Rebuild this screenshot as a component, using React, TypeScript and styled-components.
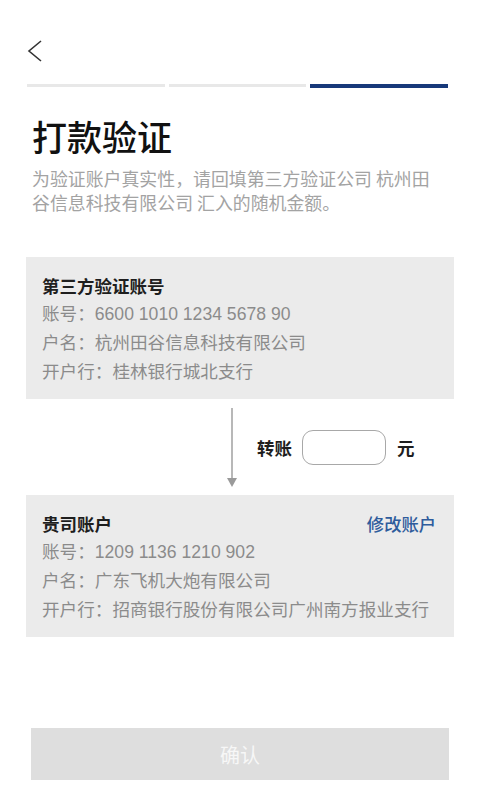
import React from "react";
import styled, { createGlobalStyle } from "styled-components";

const Global = createGlobalStyle`
  html, body { margin: 0; padding: 0; background: #ffffff; }
  body { font-family: "Noto Sans CJK SC", "Noto Sans", sans-serif; -webkit-font-smoothing: antialiased; }
  * { box-sizing: border-box; }
`;

const Page = styled.div`
  width: 480px;
  min-height: 800px;
  background: #fff;
  display: flex;
  flex-direction: column;
`;

const Header = styled.div`
  padding: 40px 0 0 27px;
  height: 62px;
  display: flex;
  align-items: flex-start;
`;

const BackButton = styled.button`
  border: 0;
  background: none;
  padding: 0;
  width: 16px;
  height: 22px;
  display: flex;
  cursor: pointer;
`;

const Progress = styled.div`
  margin-top: 21px;
  padding: 0 32px 0 27px;
  height: 5px;
  display: flex;
  align-items: center;
  gap: 4px;
`;

const Segment = styled.div<{ $active?: boolean }>`
  flex: 1;
  height: ${(p) => (p.$active ? "4px" : "3px")};
  background: ${(p) => (p.$active ? "#17397a" : "#e8e8e8")};
`;

const Title = styled.h1`
  margin: 26px 0 0;
  padding: 0 32px;
  font-size: 35px;
  line-height: 44px;
  font-weight: 500;
  color: #111;
  letter-spacing: 0;
`;

const Desc = styled.p`
  margin: 9px 0 0;
  padding: 0 40px 0 32px;
  font-size: 17.9px;
  line-height: 23.5px;
  color: #a3a3a3;
`;

const Card = styled.div<{ $first?: boolean }>`
  margin: ${(p) => (p.$first ? "43px" : "0")} 26px 0;
  background: #ebebeb;
  padding: 14px 18px 12px 16px;
  display: flex;
  flex-direction: column;
`;

const CardHead = styled.div`
  display: flex;
  justify-content: space-between;
  align-items: center;
  height: 29px;
`;

const CardTitle = styled.div`
  font-size: 17.5px;
  font-weight: 700;
  color: #1e1e1e;
`;

const EditLink = styled.a`
  font-size: 17.3px;
  font-weight: 500;
  color: #2e5c9c;
  text-decoration: none;
  cursor: pointer;
`;

const Row = styled.div`
  font-family: "Liberation Sans", "Noto Sans CJK SC", sans-serif;
  font-size: 17.6px;
  line-height: 29px;
  color: #8b8b8b;
  white-space: nowrap;
`;

const TransferRow = styled.div`
  height: 96px;
  padding-left: 227px;
  display: flex;
  align-items: center;
`;

const ArrowBox = styled.div`
  width: 10px;
  height: 79px;
  display: flex;
  margin-right: 20px;
`;

const TransferLabel = styled.span`
  font-size: 17.5px;
  font-weight: 700;
  color: #1e1e1e;
`;

const AmountInput = styled.input`
  width: 84px;
  height: 35px;
  margin: 0 11px 0 10px;
  border: 1px solid #a8a8a8;
  border-radius: 11px;
  background: #fff;
  outline: none;
  font-size: 17px;
  padding: 0 8px;
`;

const Spacer = styled.div`
  height: 91px;
`;

const ConfirmButton = styled.button`
  margin: 0 31px;
  height: 52px;
  border: 0;
  background: #dedede;
  color: #f7f7f7;
  font-family: inherit;
  font-size: 20px;
  cursor: default;
`;

const accounts = {
  third: [
    "账号：6600 1010 1234 5678 90",
    "户名：杭州田谷信息科技有限公司",
    "开户行：桂林银行城北支行",
  ],
  own: [
    "账号：1209 1136 1210 902",
    "户名：广东飞机大炮有限公司",
    "开户行：招商银行股份有限公司广州南方报业支行",
  ],
};

export default function App() {
  return (
    <Page>
      <Global />
      <Header>
        <BackButton aria-label="返回">
          <svg width="16" height="22" viewBox="0 0 16 22">
            <path d="M14 1 L2 11 L14 21" fill="none" stroke="#333" strokeWidth="1.6" />
          </svg>
        </BackButton>
      </Header>
      <Progress>
        <Segment />
        <Segment />
        <Segment $active />
      </Progress>
      <Title>打款验证</Title>
      <Desc>为验证账户真实性，请回填第三方验证公司 杭州田谷信息科技有限公司 汇入的随机金额。</Desc>

      <Card $first>
        <CardHead>
          <CardTitle>第三方验证账号</CardTitle>
        </CardHead>
        {accounts.third.map((t) => (
          <Row key={t}>{t}</Row>
        ))}
      </Card>

      <TransferRow>
        <ArrowBox>
          <svg width="10" height="79" viewBox="0 0 10 79">
            <line x1="5" y1="0" x2="5" y2="70" stroke="#9a9a9a" strokeWidth="1.4" />
            <path d="M0 70 L10 70 L5 79 Z" fill="#9a9a9a" />
          </svg>
        </ArrowBox>
        <TransferLabel>转账</TransferLabel>
        <AmountInput type="text" />
        <TransferLabel>元</TransferLabel>
      </TransferRow>

      <Card>
        <CardHead>
          <CardTitle>贵司账户</CardTitle>
          <EditLink>修改账户</EditLink>
        </CardHead>
        {accounts.own.map((t) => (
          <Row key={t}>{t}</Row>
        ))}
      </Card>

      <Spacer />
      <ConfirmButton>确认</ConfirmButton>
    </Page>
  );
}
